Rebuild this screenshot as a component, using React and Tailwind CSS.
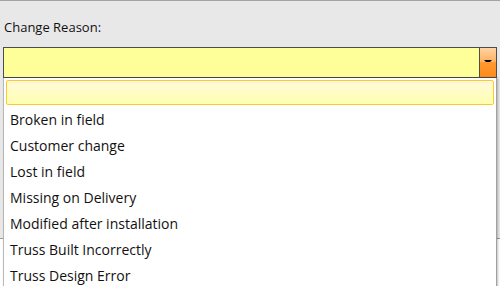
export default function App() {
  const reasons = [
    'Broken in field',
    'Customer change',
    'Lost in field',
    'Missing on Delivery',
    'Modified after installation',
    'Truss Built Incorrectly',
    'Truss Design Error',
  ];

  return (
    <div
      className="relative w-[500px] h-[286px] overflow-hidden bg-[#e8e8e8] border-t border-[#a3a3a3] text-[#111]"
      style={{ fontFamily: '"Open Sans", "Noto Sans", sans-serif' }}
    >
      <div className="pl-[4px] pt-[17px] text-[13px] leading-[18px]">Change Reason:</div>

      <div className="mx-[3px] mt-[11px] h-[31px] flex border border-[#4d4d4d] bg-[#ffff99]">
        <div className="flex-1" />
        <div className="w-[17px] border-l border-[#4d4d4d] flex flex-col">
          <div className="h-[14px] bg-gradient-to-b from-[#ffd4a0] to-[#ffb060] flex items-end justify-center">
            <div className="w-0 h-0 border-l-[4px] border-r-[4px] border-t-[4px] border-l-transparent border-r-transparent border-t-black mb-[-2px]" />
          </div>
          <div className="flex-1 bg-gradient-to-b from-[#ff9a30] to-[#ff8a1c]" />
        </div>
      </div>

      <div className="mt-[160px] h-[60px] border-t border-[#9a9a9a] bg-white" />

      <div className="absolute left-[3px] top-[77px] w-[494px] h-[220px] bg-white border-l border-[#b8b8b8] border-r border-r-[#a0a0a0] shadow-[1px_0_2px_rgba(0,0,0,0.25)]">
        <div className="mx-[2px] mt-[2px] h-[25px] rounded-[2px] border border-[#ffc830] bg-gradient-to-b from-[#fff9d8] to-[#ffffb0]" />
        <div className="pt-[1px]">
          {reasons.map((r) => (
            <div key={r} className="h-[26px] flex items-center pl-[6px] text-[14px]">
              {r}
            </div>
          ))}
        </div>
      </div>
    </div>
  );
}
